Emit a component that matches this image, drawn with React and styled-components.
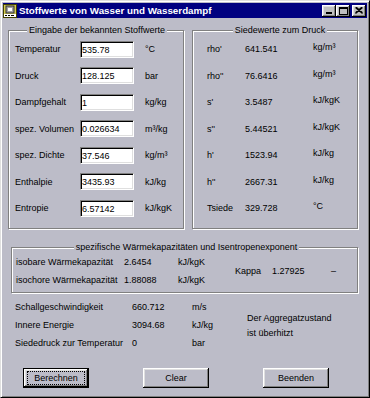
import React from 'react';
import styled, { createGlobalStyle } from 'styled-components';

const FACE = '#bcbcc8';

const Global = createGlobalStyle`
  html, body { margin: 0; padding: 0; background: ${FACE}; }
  body { font-family: "Liberation Sans", Arial, sans-serif; font-size: 9px; color: #000; }
  * { box-sizing: border-box; }
`;

const Window = styled.div`
  width: 370px;
  height: 398px;
  background: ${FACE};
  border: 1px solid;
  border-color: #dfdfdf #000 #000 #dfdfdf;
  box-shadow: inset 1px 1px 0 #fff, inset -1px -1px 0 #808080;
  padding: 2px;
  display: flex;
  flex-direction: column;
`;

const TitleBar = styled.div`
  height: 15px;
  background: #000080;
  display: flex;
  align-items: center;
  padding: 0 1px 0 0;
`;

const TitleText = styled.div`
  flex: 1;
  color: #fff;
  font-weight: bold;
  font-size: 9.8px;
  margin-left: 2px;
  white-space: nowrap;
`;

const Controls = styled.div`
  display: flex;
  align-items: center;
`;

const CtlButton = styled.div`
  width: 14px;
  height: 12px;
  background: #c0c0c0;
  margin-left: ${p => p.$gap || 0}px;
  box-shadow: inset -1px -1px #000, inset 1px 1px #fff, inset -2px -2px #808080, inset 2px 2px #dfdfdf;
  display: flex;
  align-items: center;
  justify-content: center;
  svg { display: block; }
`;

const Body = styled.div`
  flex: 1;
  display: flex;
  flex-direction: column;
  padding: 7px 9px 0 5px;
`;

const TopRow = styled.div`
  display: flex;
  gap: 8px;
  align-items: stretch;
`;

const Group = styled.fieldset`
  margin: 0;
  min-width: 0;
  width: ${p => p.$w}px;
  border: 1px solid #808080;
  box-shadow: inset 1px 1px 0 #fff, 1px 1px 0 #fff;
  padding: ${p => p.$pad};
`;

const Legend = styled.legend`
  margin: 0 auto;
  padding: 0 2px;
  line-height: 11px;
  background: ${FACE};
`;

const FieldGrid = styled.div`
  display: grid;
  grid-template-columns: ${p => p.$cols};
  grid-auto-rows: ${p => p.$row}px;
  align-items: center;
  white-space: nowrap;
`;

const Cell = styled.div`
  padding-bottom: ${p => p.$raise || 0}px;
`;

const Field = styled.input`
  width: 54px;
  height: 17px;
  margin: 0;
  padding: 1px 0 0 1px;
  font-family: "Liberation Sans", Arial, sans-serif;
  font-size: 9px;
  color: #000;
  background: #fff;
  border: 1px solid;
  border-color: #808080 #fff #fff #808080;
  box-shadow: inset 1px 1px #000, inset -1px -1px #dfdfdf;
  outline: none;
`;

const MidGroup = styled(Group)`
  margin-top: 13px;
  margin-left: 3px;
`;

const MidRow = styled.div`
  display: flex;
  align-items: center;
  white-space: nowrap;
`;

const Fixed = styled.div`
  width: ${p => p.$w}px;
  flex: none;
`;

const BottomRow = styled.div`
  display: flex;
  margin-top: 5px;
  margin-left: 7px;
`;

const StateText = styled.div`
  margin-top: 13px;
  line-height: 15px;
`;

const ButtonRow = styled.div`
  display: flex;
  gap: 54px;
  margin-top: 16px;
  margin-left: 15px;
`;

const Button = styled.button`
  width: 66px;
  height: 20px;
  margin: 0;
  padding: ${p => (p.$default ? '3px 4px' : '2px')};
  background: ${FACE};
  font-family: "Liberation Sans", Arial, sans-serif;
  font-size: 9px;
  color: #000;
  border: ${p => (p.$default ? '1px solid #000' : 'none')};
  box-shadow: inset -1px -1px #000, inset 1px 1px #fff, inset -2px -2px #808080, inset 2px 2px #dfdfdf;
  display: flex;
  cursor: default;
`;

const ButtonLabel = styled.span`
  flex: 1;
  display: flex;
  align-items: center;
  justify-content: center;
  outline: ${p => (p.$focus ? '1px dotted #000' : 'none')};
`;

const AppIcon = () => (
  <svg width="14" height="14" viewBox="0 0 14 14">
    <rect x="0.5" y="0.5" width="13" height="13" fill="#d4cc50" stroke="#404000" />
    <rect x="3" y="2" width="8" height="7" fill="#a0a0a0" stroke="#303030" strokeWidth="1" />
    <rect x="5" y="4" width="4" height="3" fill="#fff" />
    <rect x="1" y="10" width="12" height="3" fill="#fff" />
    <rect x="2" y="11" width="2" height="1" fill="#000" />
    <rect x="5" y="11" width="2" height="1" fill="#000" />
    <rect x="8" y="11" width="3" height="1" fill="#000" />
  </svg>
);

const MinGlyph = () => (
  <svg width="8" height="8" viewBox="0 0 8 8"><rect x="1" y="5" width="6" height="2" fill="#000" /></svg>
);
const MaxGlyph = () => (
  <svg width="9" height="8" viewBox="0 0 9 8">
    <rect x="0.5" y="0.5" width="8" height="7" fill="none" stroke="#000" />
    <rect x="0" y="1" width="9" height="1" fill="#000" />
  </svg>
);
const CloseGlyph = () => (
  <svg width="8" height="7" viewBox="0 0 8 7">
    <path d="M0.5 0.5 L7.5 6.5 M7.5 0.5 L0.5 6.5 M1.5 0.5 L7.5 5.8 M6.5 0.5 L0.5 5.8" stroke="#000" strokeWidth="1.2" />
  </svg>
);

const inputs = [
  ['Temperatur', '535.78', '°C'],
  ['Druck', '128.125', 'bar'],
  ['Dampfgehalt', '1', 'kg/kg'],
  ['spez. Volumen', '0.026634', 'm³/kg'],
  ['spez. Dichte', '37.546', 'kg/m³'],
  ['Enthalpie', '3435.93', 'kJ/kg'],
  ['Entropie', '6.57142', 'kJ/kgK'],
];

const siede = [
  ["rho'", '641.541', 'kg/m³'],
  ["rho''", '76.6416', 'kg/m³'],
  ["s'", '3.5487', 'kJ/kgK'],
  ["s''", '5.44521', 'kJ/kgK'],
  ["h'", '1523.94', 'kJ/kg'],
  ["h''", '2667.31', 'kJ/kg'],
  ['Tsiede', '329.728', '°C'],
];

const waerme = [
  ['isobare Wärmekapazität', '2.6454', 'kJ/kgK'],
  ['isochore Wärmekapazität', '1.88088', 'kJ/kgK'],
];

const misc = [
  ['Schallgeschwindigkeit', '660.712', 'm/s'],
  ['Innere Energie', '3094.68', 'kJ/kg'],
  ['Siededruck zur Temperatur', '0', 'bar'],
];

export default function App() {
  return (
    <>
      <Global />
      <Window>
        <TitleBar>
          <AppIcon />
          <TitleText>Stoffwerte von Wasser und Wasserdampf</TitleText>
          <Controls>
            <CtlButton><MinGlyph /></CtlButton>
            <CtlButton><MaxGlyph /></CtlButton>
            <CtlButton $gap={2}><CloseGlyph /></CtlButton>
          </Controls>
        </TitleBar>
        <Body>
          <TopRow>
            <Group $w={176} $pad="0 4px 6px 6px">
              <Legend>Eingabe der bekannten Stoffwerte</Legend>
              <FieldGrid $cols="65px 65px auto" $row={26.5}>
                {inputs.map(([l, v, u]) => (
                  <React.Fragment key={l}>
                    <Cell>{l}</Cell>
                    <Field readOnly defaultValue={v} />
                    <Cell>{u}</Cell>
                  </React.Fragment>
                ))}
              </FieldGrid>
            </Group>
            <Group $w={166} $pad="0 4px 6px 14px">
              <Legend>Siedewerte zum Druck</Legend>
              <FieldGrid $cols="38px 68px auto" $row={26.5}>
                {siede.map(([l, v, u]) => (
                  <React.Fragment key={l}>
                    <Cell>{l}</Cell>
                    <Cell>{v}</Cell>
                    <Cell $raise={4}>{u}</Cell>
                  </React.Fragment>
                ))}
              </FieldGrid>
            </Group>
          </TopRow>
          <MidGroup $w={347} $pad="0 0 3px 4px">
            <Legend>spezifische Wärmekapazitäten und Isentropenexponent</Legend>
            <MidRow>
              <FieldGrid $cols="108px 54px 57px" $row={18}>
                {waerme.map(([l, v, u]) => (
                  <React.Fragment key={l}>
                    <Cell>{l}</Cell>
                    <Cell>{v}</Cell>
                    <Cell>{u}</Cell>
                  </React.Fragment>
                ))}
              </FieldGrid>
              <Fixed $w={37}>Kappa</Fixed>
              <Fixed $w={59}>1.27925</Fixed>
              <Fixed $w={10}>–</Fixed>
            </MidRow>
          </MidGroup>
          <BottomRow>
            <FieldGrid $cols="117px 60px 55px" $row={18}>
              {misc.map(([l, v, u]) => (
                <React.Fragment key={l}>
                  <Cell>{l}</Cell>
                  <Cell>{v}</Cell>
                  <Cell>{u}</Cell>
                </React.Fragment>
              ))}
            </FieldGrid>
            <StateText>
              Der Aggregatzustand
              <br />
              ist überhitzt
            </StateText>
          </BottomRow>
          <ButtonRow>
            <Button $default><ButtonLabel $focus>Berechnen</ButtonLabel></Button>
            <Button><ButtonLabel>Clear</ButtonLabel></Button>
            <Button><ButtonLabel>Beenden</ButtonLabel></Button>
          </ButtonRow>
        </Body>
      </Window>
    </>
  );
}
